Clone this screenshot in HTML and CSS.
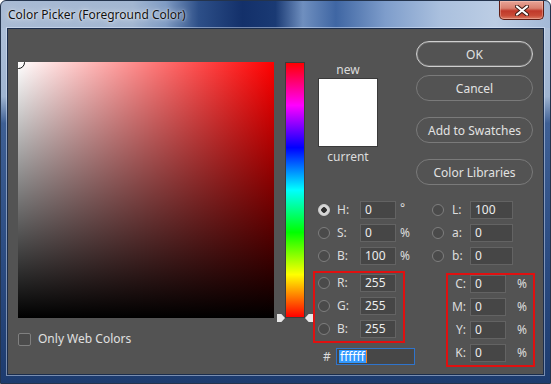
FILE: index.html
```html
<!DOCTYPE html>
<html lang="en">
<head>
  <meta charset="UTF-8" />
  <title>Color Picker</title>
  <link rel="stylesheet" href="styles.css">
</head>
<body>
  <div class="window">
    <div class="titlebar">
      <span class="title">Color Picker (Foreground Color)</span>
      <button class="close-btn" aria-label="Close">
        <svg width="14" height="11" viewBox="0 0 14 11">
          <path d="M2 1.5 L12 9.5 M12 1.5 L2 9.5" stroke="#3a1a14" stroke-width="4" stroke-linecap="round"/>
          <path d="M2 1.5 L12 9.5 M12 1.5 L2 9.5" stroke="#fff" stroke-width="2.2" stroke-linecap="round"/>
        </svg>
      </button>
    </div>

    <div class="content">
      <div class="pick">
        <div class="field"><span class="marker"></span></div>
        <label class="webonly"><span class="checkbox"></span>Only Web Colors</label>
      </div>

      <div class="hue">
        <div class="hue-bar"></div>
        <span class="arrow arrow-left"></span>
        <span class="arrow arrow-right"></span>
      </div>

      <div class="side">
        <div class="top">
          <div class="swatch">
            <div class="swatch-label">new</div>
            <div class="swatch-box"></div>
            <div class="swatch-label current">current</div>
          </div>
          <div class="buttons">
            <button class="btn btn-ok">OK</button>
            <button class="btn btn-cancel">Cancel</button>
            <button class="btn btn-gap">Add to Swatches</button>
            <button class="btn btn-gap">Color Libraries</button>
          </div>
        </div>

        <div class="fields">
          <div class="col-left">
            <div class="group hsb">
              <div class="row"><span class="radio checked"></span><span class="lbl">H:</span><span class="val">0</span><span class="unit deg">°</span></div>
              <div class="row"><span class="radio"></span><span class="lbl">S:</span><span class="val">0</span><span class="unit">%</span></div>
              <div class="row"><span class="radio"></span><span class="lbl">B:</span><span class="val">100</span><span class="unit">%</span></div>
            </div>
            <div class="group redbox rgb">
              <div class="row"><span class="radio"></span><span class="lbl">R:</span><span class="val">255</span></div>
              <div class="row"><span class="radio"></span><span class="lbl">G:</span><span class="val">255</span></div>
              <div class="row"><span class="radio"></span><span class="lbl">B:</span><span class="val">255</span></div>
            </div>
            <div class="hexrow">
              <span class="hash">#</span>
              <span class="hex"><span class="sel">ffffff</span><span class="caret"></span></span>
            </div>
          </div>

          <div class="col-right">
            <div class="group lab">
              <div class="row"><span class="radio"></span><span class="lbl">L:</span><span class="val wide">100</span></div>
              <div class="row"><span class="radio"></span><span class="lbl">a:</span><span class="val wide">0</span></div>
              <div class="row"><span class="radio"></span><span class="lbl">b:</span><span class="val wide">0</span></div>
            </div>
            <div class="group redbox cmyk">
              <div class="row"><span class="lbl">C:</span><span class="val">0</span><span class="unit">%</span></div>
              <div class="row"><span class="lbl">M:</span><span class="val">0</span><span class="unit">%</span></div>
              <div class="row"><span class="lbl">Y:</span><span class="val">0</span><span class="unit">%</span></div>
              <div class="row"><span class="lbl">K:</span><span class="val">0</span><span class="unit">%</span></div>
            </div>
          </div>
        </div>
      </div>
    </div>
  </div>
</body>
</html>
```

FILE: styles.css
```css
* { box-sizing: border-box; margin: 0; padding: 0; }
body { background: #fff; font-family: 'Noto Sans', 'Open Sans', sans-serif; font-size: 12px; }

.window {
  width: 551px;
  height: 384px;
  border: 1px solid #24344d;
  border-radius: 6px 6px 0 0;
  overflow: hidden;
  display: flex;
  flex-direction: column;
  padding: 0 6px 8px 6px;
  background:
    linear-gradient(90deg, #a9bbd4 0%, #a2b6d1 24%, #7f9bc3 30%, #2d4f88 36%, #13306a 44%, #1a3a74 50%, #6f8fbf 55%, #3f66a3 61%, #7e9dcb 70%, #aac0de 80%, #bccde4 90%, #a4b9d7 100%) top / 100% 27px no-repeat,
    linear-gradient(180deg, #b3c4db 0%, #9fb4d1 25%, #3e5f94 32%, #2a4a80 70%, #1d3b6e 100%);
}

.titlebar {
  height: 27px;
  display: flex;
  justify-content: space-between;
  align-items: flex-start;
  flex-shrink: 0;
}
.title {
  margin: 7px 0 0 1px;
  line-height: 14px;
  color: #111;
  text-shadow: 0 0 6px rgba(255, 255, 255, 0.9), 0 0 2px rgba(255, 255, 255, 0.8);
}
.close-btn {
  width: 45px;
  height: 19px;
  border: 1px solid #5e1d14;
  border-top: none;
  border-radius: 0 0 5px 5px;
  background: linear-gradient(180deg, #e8a497 0%, #d8806f 40%, #c0392a 55%, #c84a36 80%, #db7a62 100%);
  box-shadow: inset 0 0 0 1px rgba(255, 220, 210, 0.35);
  display: flex;
  align-items: center;
  justify-content: center;
}

.content {
  flex: 1;
  display: flex;
  padding-left: 10px;
  background: #535353;
  border: 1px solid #1b2d4c;
  box-shadow: 0 0 0 1px rgba(230, 240, 255, 0.45);
  color: #dcdcdc;
}

/* saturation / brightness field */
.pick { width: 256px; margin-top: 33px; }
.field {
  position: relative;
  width: 256px;
  height: 256px;
  overflow: hidden;
  background:
    linear-gradient(to bottom, rgba(0, 0, 0, 0), #000),
    linear-gradient(to right, #fff, #f00);
}
.marker {
  position: absolute;
  left: -6px;
  top: -6px;
  width: 13px;
  height: 13px;
  border-radius: 50%;
  border: 1px solid #111;
  box-shadow: inset 0 0 0 1px #fff;
}
.webonly { display: flex; align-items: center; margin-top: 14px; line-height: 14px; color: #e0e0e0; }
.checkbox {
  width: 13px;
  height: 13px;
  margin-right: 7px;
  border: 1px solid #808080;
  border-radius: 2px;
  background: #4b4b4b;
}

/* hue slider */
.hue { position: relative; width: 20px; margin: 33px 0 0 11px; }
.hue-bar {
  width: 20px;
  height: 256px;
  border: 1px solid #3c3c3c;
  background: linear-gradient(to bottom, #f00 0%, #f0f 16.67%, #00f 33.33%, #0ff 50%, #0f0 66.67%, #ff0 83.33%, #f00 100%);
}
.arrow {
  position: absolute;
  top: 252px;
  width: 8px;
  height: 8px;
  background: #e6e6e6;
}
.arrow-left { left: -8px; clip-path: polygon(0 0, 55% 0, 100% 50%, 55% 100%, 0 100%); }
.arrow-right { left: 20px; clip-path: polygon(100% 0, 45% 0, 0 50%, 45% 100%, 100% 100%); }

/* right side */
.side { width: 222px; margin-left: 8px; display: flex; flex-direction: column; }
.top { display: flex; padding-top: 12px; }
.swatch { width: 60px; margin: 22px 0 0 5px; text-align: center; }
.swatch-label { line-height: 14px; color: #dcdcdc; }
.swatch-label.current { margin-top: 3px; }
.swatch-box { height: 69px; margin-top: 1px; background: #fff; border: 1px solid #3a3a3a; }

.buttons { width: 117px; margin-left: 38px; display: flex; flex-direction: column; }
.btn {
  height: 26px;
  border: 1px solid #7a7a7a;
  border-radius: 13px;
  background: #535353;
  color: #e2e2e2;
  font-family: 'Noto Sans', 'Open Sans', sans-serif;
  font-size: 12px;
}
.btn-ok { border-color: #cfcfcf; box-shadow: inset 0 0 0 1px rgba(200, 200, 200, 0.3); }
.btn-cancel { margin-top: 8px; }
.btn-gap { margin-top: 16px; }

.fields { display: flex; margin-top: 16px; }
.group { display: flex; flex-direction: column; gap: 5px; }
.row { display: flex; align-items: center; height: 18px; }
.radio {
  width: 12px;
  height: 12px;
  border-radius: 50%;
  border: 1px solid #7e7e7e;
  background: #4a4a4a;
}
.radio.checked {
  border-color: #cfcfcf;
  background: radial-gradient(circle, #2e2e2e 0 2.5px, #d6d6d6 3px);
}
.lbl { line-height: 18px; color: #dcdcdc; }
.val {
  width: 36px;
  height: 18px;
  padding-left: 4px;
  line-height: 16px;
  background: #464646;
  border: 1px solid #636363;
  color: #ececec;
}
.val.wide { width: 43px; }
.unit { margin-left: 4px; line-height: 18px; color: #dcdcdc; }
.unit.deg { align-self: flex-start; line-height: 14px; }

.col-left { width: 119px; }
.col-left .radio { margin-right: 7px; }
.col-left .lbl { width: 23px; }
.hsb { padding-left: 5px; }
.redbox { border: 2px solid #e01010; }
.rgb { width: 92px; margin-top: 6px; padding: 1px 0 3px 3px; }

.hexrow { display: flex; align-items: center; margin-top: 5px; padding-left: 10px; height: 17px; }
.hash { width: 13px; color: #dcdcdc; }
.hex {
  display: flex;
  align-items: center;
  width: 79px;
  height: 17px;
  padding-left: 2px;
  background: #474747;
  border: 1px solid #2f74cc;
}
.sel { background: #3399ff; color: #fff; line-height: 13px; padding: 0 1px; }
.caret { width: 1px; height: 13px; background: #f08020; }

.col-right .lab .radio { margin-right: 8px; }
.col-right .lab .lbl { width: 18px; }
.cmyk { width: 89px; margin: 8px 0 0 14px; padding-bottom: 3px; }
.cmyk .lbl { width: 18px; margin-right: 4px; text-align: right; }
.cmyk .unit { margin-left: 11px; }
```
